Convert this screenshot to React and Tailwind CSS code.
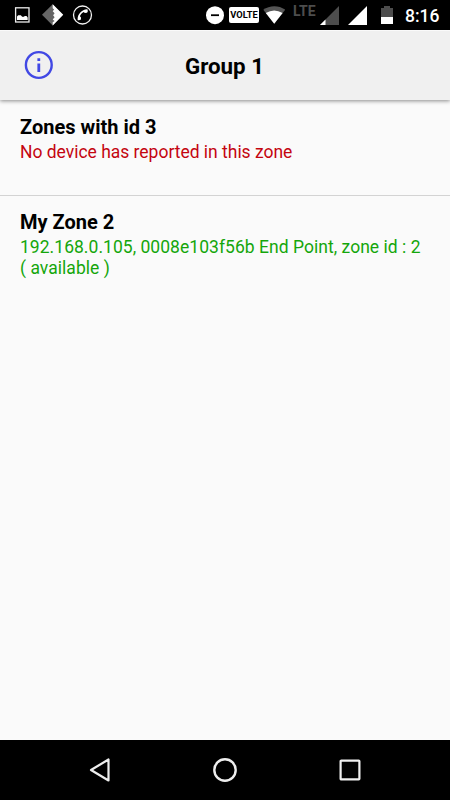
const zones = [
  {
    name: 'Zones with id 3',
    status: 'No device has reported in this zone',
    available: false,
  },
  {
    name: 'My Zone 2',
    status: '192.168.0.105, 0008e103f56b End Point, zone id : 2 (\u00a0available\u00a0)',
    available: true,
  },
];

function ImageIcon() {
  return (
    <svg className="ml-[14px] h-[30px] w-4" viewBox="14 0 16 30" fill="none">
      <rect x="15.6" y="7.8" width="13.4" height="14.2" stroke="#ededed" strokeWidth="1.3" />
      <path d="M17 20v-3.4l1.2-1.4h2.6l1.4 1.6h1.6l1-.8h1.7l1.2 1.4V20z" fill="#fff" />
    </svg>
  );
}

function DiamondIcon() {
  return (
    <svg className="ml-3 h-[30px] w-[22px]" viewBox="42 0 22 30">
      <path d="M42 14.8 52.7 4.2 63.2 14.8 52.7 25.5z" fill="#666" />
      <path
        d="M52.7 4.2 63.2 14.8 52.7 25.5V22.2l1.9-1.2-1.9-1.5 1.9-2.2-1.5-2 1.5-2.1-1.9-2 1.4-1.7-1.4-1.3z"
        fill="#fff"
      />
    </svg>
  );
}

function CallIcon() {
  return (
    <svg className="ml-2 h-[30px] w-[21px]" viewBox="72 0 21 30" fill="none">
      <circle cx="82.5" cy="15" r="9" stroke="#f2f2f2" strokeWidth="1.3" />
      <path
        d="M87 9.2c-5.2.2-9.4 4.8-9.4 10.2 0 .6.3.9.9.9l1.7-.3c.5-.1.8-.4.8-.9l-.1-1.9-1-.9c.6-1.8 2-3.3 3.9-4.2l1 .8 2-.2c.5-.1.9-.4.9-.9V10c0-.5-.3-.8-.7-.8z"
        fill="#fff"
      />
    </svg>
  );
}

function DoNotDisturbIcon() {
  return (
    <svg className="h-[30px] w-[18px]" viewBox="0 0 18 30">
      <circle cx="9" cy="15.2" r="9" fill="#fff" />
      <path d="M5 14.3h8v1.8H5z" fill="#000" />
    </svg>
  );
}

function WifiIcon() {
  return (
    <svg className="ml-1 h-[30px] w-[22px]" viewBox="263 0 22 30">
      <path d="M263.3 9.7C269.5 5 279 5 285.2 9.7L274.3 23.8z" fill="#555" />
      <path d="M265.8 13q8.4-5 16.8 0l-8.4 10.8z" fill="#fff" />
    </svg>
  );
}

function StatusBar() {
  return (
    <div className="flex h-[30px] items-center bg-black">
      <ImageIcon />
      <DiamondIcon />
      <CallIcon />
      <div className="ml-auto flex h-[30px] items-center">
        <DoNotDisturbIcon />
        <div className="ml-[5px] flex h-4 w-[30px] items-center justify-center rounded-[2px] bg-white text-[9.3px] leading-none font-bold text-black">
          VOLTE
        </div>
        <WifiIcon />
        <span className="ml-2 w-[23px] pb-2 text-[14px] leading-none font-bold text-[#4d4d4d]">
          LTE
        </span>
        <svg className="ml-1 h-[30px] w-5" viewBox="320 0 20 30">
          <path d="M320 25 339 6v19z" fill="#4d4d4d" />
          <path d="m320 25 5.5-5.5V25z" fill="#fff" />
        </svg>
        <svg className="ml-2 h-[30px] w-5" viewBox="348 0 20 30">
          <path d="M348 25 367 6v19z" fill="#fff" />
        </svg>
        <svg className="ml-[13px] h-[30px] w-3" viewBox="381 0 12 30">
          <path d="M381 8h3V6h6v2h3v9h-12z" fill="#4d4d4d" />
          <path d="M381 17h12v7h-12z" fill="#fff" />
        </svg>
        <span className="ml-3 w-[45px] pt-px text-[17.5px] leading-[30px] font-medium text-white">
          8:16
        </span>
      </div>
    </div>
  );
}

function Header() {
  return (
    <header className="grid h-[70px] grid-cols-[1fr_auto_1fr] items-center border-t border-[#fafafa] bg-[#f0f0f0] shadow-[0_1px_4px_rgba(0,0,0,0.45)]">
      <button type="button" aria-label="Info" className="-mt-0.5 ml-6 size-[30px]">
        <svg className="size-[30px]" viewBox="0 0 30 30" fill="none">
          <circle cx="14.8" cy="15" r="12.9" stroke="#4148e4" strokeWidth="2.4" />
          <path d="M13.4 13.5h2.8v8.6h-2.8zM13.4 8.2h2.8V11h-2.8z" fill="#4148e4" />
        </svg>
      </button>
      <h1 className="mr-px pt-px text-[22.3px] leading-none font-bold text-black">Group 1</h1>
    </header>
  );
}

function ZoneItem({ zone }) {
  return (
    <li className="h-24 border-b border-[#d3d3d3] px-5 pt-[15px] last:border-b-0 last:pt-3.5">
      <h2 className="text-[20px] leading-6 font-bold text-black">{zone.name}</h2>
      <p
        className={`mt-[3px] text-[17.5px] leading-[20.5px] ${
          zone.available
            ? 'tracking-[0.035px] text-[#14a60b]'
            : 'tracking-[-0.02px] text-[#c40510]'
        }`}
      >
        {zone.status}
      </p>
    </li>
  );
}

function NavigationBar() {
  return (
    <nav className="flex h-[60px] items-center justify-center gap-[101px] bg-black">
      <svg className="size-6" viewBox="0 0 24 24" fill="none" stroke="#eee" strokeWidth="2.2">
        <path d="M3 12 20.5 1.5v21z" strokeLinejoin="round" />
      </svg>
      <svg className="size-6" viewBox="0 0 24 24" fill="none" stroke="#eee" strokeWidth="2.4">
        <circle cx="12" cy="12" r="10.7" />
      </svg>
      <svg className="size-6" viewBox="0 0 24 24" fill="none" stroke="#eee" strokeWidth="2.2">
        <rect x="2.6" y="2.6" width="18.8" height="18.8" rx="0.7" />
      </svg>
    </nav>
  );
}

export default function App() {
  return (
    <div className="flex h-screen flex-col bg-[#fafafa] font-['Roboto',sans-serif]">
      <StatusBar />
      <Header />
      <ul className="flex-1">
        {zones.map((zone) => (
          <ZoneItem key={zone.name} zone={zone} />
        ))}
      </ul>
      <NavigationBar />
    </div>
  );
}
